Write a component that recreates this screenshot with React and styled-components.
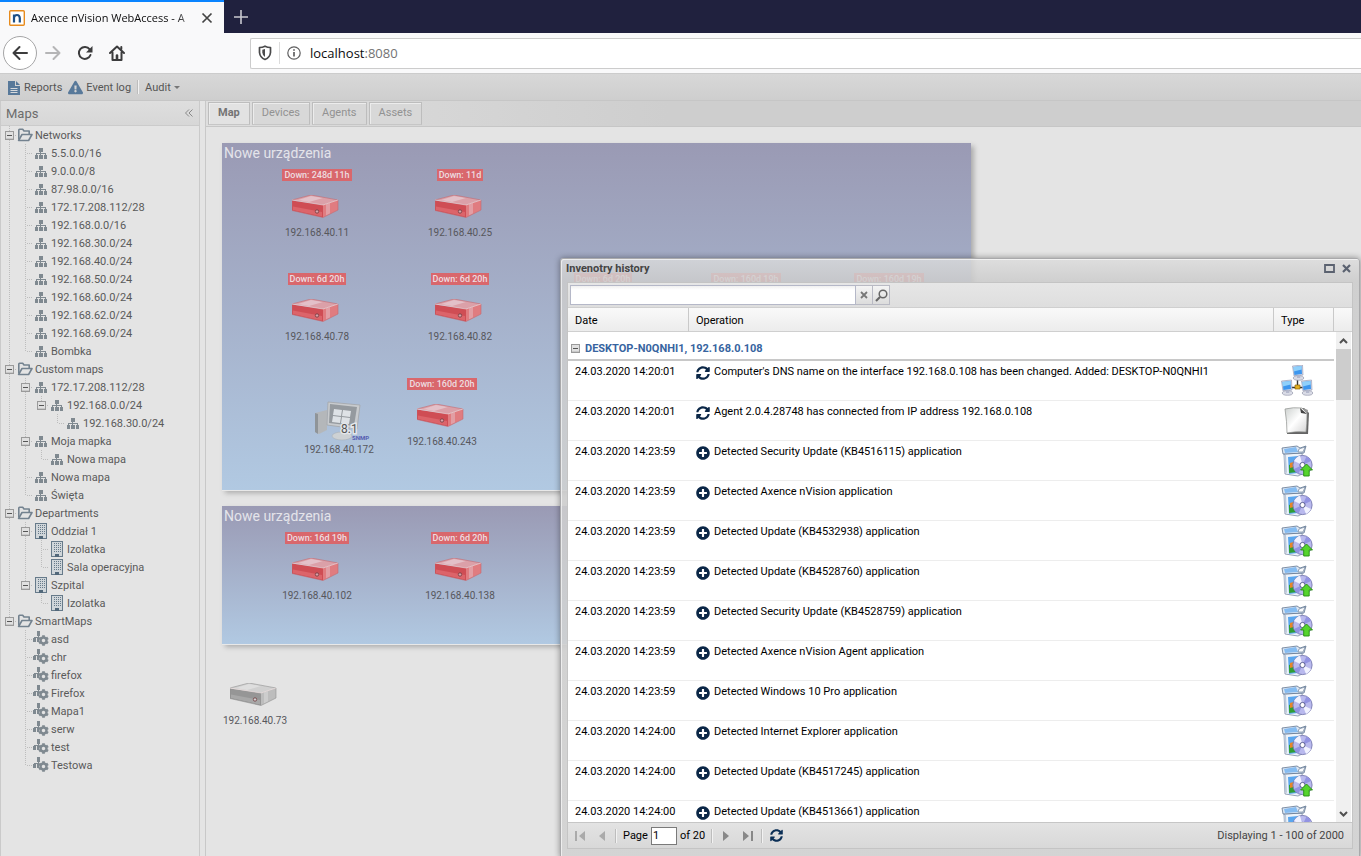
import { useState } from 'react';
import styled, { createGlobalStyle } from 'styled-components';
import { FaCog, FaExclamationTriangle, FaPlusCircle, FaSyncAlt } from 'react-icons/fa';

const GlobalStyle = createGlobalStyle`
    * {
        box-sizing: border-box;
    }

    body {
        margin: 0;
        font-family: Roboto, "Liberation Sans", sans-serif;
        font-size: 11px;
        color: #555;
    }

    button {
        padding: 0;
        border: none;
        background: none;
        font: inherit;
        color: inherit;
    }

    svg {
        display: block;
        flex-shrink: 0;
    }
`;

const tree = [
    {
        name: 'Networks',
        icon: 'folder',
        children: [
            '5.5.0.0/16',
            '9.0.0.0/8',
            '87.98.0.0/16',
            '172.17.208.112/28',
            '192.168.0.0/16',
            '192.168.30.0/24',
            '192.168.40.0/24',
            '192.168.50.0/24',
            '192.168.60.0/24',
            '192.168.62.0/24',
            '192.168.69.0/24',
            'Bombka',
        ].map((name) => ({ name, icon: 'map' })),
    },
    {
        name: 'Custom maps',
        icon: 'folder',
        children: [
            {
                name: '172.17.208.112/28',
                icon: 'map',
                children: [
                    {
                        name: '192.168.0.0/24',
                        icon: 'map',
                        children: [{ name: '192.168.30.0/24', icon: 'map' }],
                    },
                ],
            },
            { name: 'Moja mapka', icon: 'map', children: [{ name: 'Nowa mapa', icon: 'map' }] },
            { name: 'Nowa mapa', icon: 'map' },
            { name: 'Święta', icon: 'map' },
        ],
    },
    {
        name: 'Departments',
        icon: 'folder',
        children: [
            {
                name: 'Oddział 1',
                icon: 'building',
                children: [
                    { name: 'Izolatka', icon: 'building' },
                    { name: 'Sala operacyjna', icon: 'building' },
                ],
            },
            { name: 'Szpital', icon: 'building', children: [{ name: 'Izolatka', icon: 'building' }] },
        ],
    },
    {
        name: 'SmartMaps',
        icon: 'folder',
        children: ['asd', 'chr', 'firefox', 'Firefox', 'Mapa1', 'serw', 'test', 'Testowa'].map(
            (name) => ({ name, icon: 'smart' }),
        ),
    },
];

const panels = [
    { title: 'Nowe urządzenia', x: 16, y: 16, width: 749, height: 347 },
    { title: 'Nowe urządzenia', x: 16, y: 379, width: 749, height: 138 },
];

const devices = [
    { name: '192.168.40.11', down: '248d 11h', x: 111, y: 42 },
    { name: '192.168.40.25', down: '11d', x: 254, y: 42 },
    { name: '192.168.40.78', down: '6d 20h', x: 111, y: 146 },
    { name: '192.168.40.82', down: '6d 20h', x: 254, y: 146 },
    { name: '192.168.40.84', down: '6d 20h', x: 397, y: 146 },
    { name: '192.168.40.90', down: '160d 19h', x: 540, y: 146 },
    { name: '192.168.40.94', down: '160d 19h', x: 683, y: 146 },
    { name: '192.168.40.172', kind: 'pc', x: 133, y: 273 },
    { name: '192.168.40.243', down: '160d 20h', x: 236, y: 251 },
    { name: '192.168.40.102', down: '16d 19h', x: 111, y: 405 },
    { name: '192.168.40.138', down: '6d 20h', x: 254, y: 405 },
    { name: '192.168.40.73', kind: 'idle', x: 49, y: 530 },
];

const history = [
    ['24.03.2020 14:20:01', 'change', "Computer's DNS name on the interface 192.168.0.108 has been changed. Added: DESKTOP-N0QNHI1", 'network'],
    ['24.03.2020 14:20:01', 'change', 'Agent 2.0.4.28748 has connected from IP address 192.168.0.108', 'note'],
    ['24.03.2020 14:23:59', 'add', 'Detected Security Update (KB4516115) application', 'update'],
    ['24.03.2020 14:23:59', 'add', 'Detected Axence nVision application', 'app'],
    ['24.03.2020 14:23:59', 'add', 'Detected Update (KB4532938) application', 'update'],
    ['24.03.2020 14:23:59', 'add', 'Detected Update (KB4528760) application', 'update'],
    ['24.03.2020 14:23:59', 'add', 'Detected Security Update (KB4528759) application', 'update'],
    ['24.03.2020 14:23:59', 'add', 'Detected Axence nVision Agent application', 'app'],
    ['24.03.2020 14:23:59', 'add', 'Detected Windows 10 Pro application', 'app'],
    ['24.03.2020 14:24:00', 'add', 'Detected Internet Explorer application', 'app'],
    ['24.03.2020 14:24:00', 'add', 'Detected Update (KB4517245) application', 'update'],
    ['24.03.2020 14:24:00', 'add', 'Detected Update (KB4513661) application', 'app'],
];

/* ---------- icons ---------- */

const FolderIcon = () => (
    <svg width="16" height="16" viewBox="0 0 16 16" fill="none" stroke="#73828f" strokeWidth="1.6" strokeLinejoin="round">
        <path d="M1.8 12.500V3Q1.800 2.300 2.500 2.300h3.200L7 4h5.200v3" />
        <path d="M1.600 13.500 5 7.500h10l-3.400 6z" />
    </svg>
);

const BuildingIcon = () => (
    <svg width="16" height="18" viewBox="0 0 16 18" fill="none" shapeRendering="crispEdges">
        <path d="M2 1h12v16H2z" fill="#667a8a" />
        <path d="M3 2h10v14H3z" fill="#d0d6da" />
        <path d="M5.500 3v10M7.500 3v10M9.500 3v10M11.500 3v10" stroke="#667a8a" strokeDasharray="1 1" />
        <path d="M6 14h4v3H6z" fill="#52687a" />
    </svg>
);

const MapIcon = () => (
    <svg width="16" height="18" viewBox="0 0 16 18" fill="#7f8990" shapeRendering="crispEdges">
        <path d="M6 4h4v4H6zM7 8h1v2H7zM3 9h10v1H3zM3 9h1v3H3zM7 9h1v3H7zM12 9h1v3h-1z" />
        <path d="M2 11h3v4H2zM6 11h4v4H6zM11 11h3v4h-3z" />
    </svg>
);

const SmartIcon = () => (
    <svg width="16" height="18" viewBox="0 0 16 18" fill="#7f8990">
        <path d="M4 1h3v5H4zM5 6h1v2H5zM1 7h5v1H1zM1 7h1v3H1zM0 8h3v4H0zM4 8h2v4H4z" shapeRendering="crispEdges" />
        <FaCog x="5" y="5" size={11} color="#7f8990" />
    </svg>
);

const TreeIcon = ({ type }) => {
    if (type === 'folder') return <FolderIcon />;
    if (type === 'building') return <BuildingIcon />;
    if (type === 'smart') return <SmartIcon />;
    return <MapIcon />;
};

const TreeGuide = ({ up, down, across }) => (
    <svg width="16" height="18" viewBox="0 0 16 18" stroke="#bdbdbd" strokeDasharray="1 1" fill="none" shapeRendering="crispEdges">
        {up && <path d="M8.500 0v9" />}
        {down && <path d="M8.500 10v8" />}
        {across && <path d="M10 9.500h6" />}
    </svg>
);

const MinusBox = () => (
    <svg width="9" height="9" viewBox="0 0 9 9" shapeRendering="crispEdges">
        <path d="M.5 .5h8v8h-8z" fill="#e0e0e0" stroke="#9a9a9a" />
        <path d="M1 7.500h7" stroke="#c9c9c9" />
        <path d="M2 4.500h5" stroke="#555" />
    </svg>
);

const ReportIcon = () => (
    <svg width="14" height="15" viewBox="0 0 14 15">
        <path d="M1 1h7v5h5v9H1zM9 1l4 4H9z" fill="#58799a" />
        <path d="M3.500 8.500h7M3.500 10.500h7M3.500 12.500h7" stroke="#d6d9dc" />
    </svg>
);

const DeviceIcon = ({ idle }) => {
    const c = idle
        ? { top: '#d0d0d0', shine: '#dedede', front: '#969696', low: '#a8a8a8', side: '#bdbdbd', line: '#8c8c8c' }
        : { top: '#dba0a8', shine: '#e3c0c8', front: '#cf4d54', low: '#dc646a', side: '#e07c80', line: '#c4666d' };
    return (
        <svg width="50" height="24" viewBox="0 0 50 24">
            <path d="M0 5 19 0l27 5-15 5z" fill={c.top} />
            <path d="M6 5 19 1l12 2-14 4z" fill={c.shine} />
            <path d="M0 5.500 31 10v12.500L0 15.500z" fill={c.front} />
            <path d="M1 11.500 30 17v4.500L1 15z" fill={c.low} />
            <path d="M31 10 46 5v10l-15 7.500z" fill={c.side} />
            <path d="m34 9.200 4-1.200v10.600l-4 2z" fill={c.shine} opacity=".5" />
            <path d="M0 5 19 0l27 5v10l-15 7.500L0 15.500z" fill="none" stroke={c.line} strokeWidth=".7" opacity=".8" />
            <path d="m0 5 31 5 15-5" fill="none" stroke="#f1dede" strokeWidth=".7" opacity=".8" />
            <circle cx="25" cy="16.500" r="1.700" fill={c.top} stroke="#70383c" strokeWidth=".8" />
        </svg>
    );
};

const PcIcon = () => (
    <svg width="62" height="42" viewBox="0 0 62 42">
        <path d="m7 13 12-3v20L11 34l-4-2z" fill="#b4b7ba" />
        <path d="m7 13 3 1v20l-3-2z" fill="#8f9498" />
        <path d="m20 2 32 3-3 24-30-4z" fill="#c8cbce" stroke="#a3a6a9" strokeWidth=".8" />
        <path d="m22 4 27 3-3 19-25-3z" fill="#959a9f" />
        <path d="m26 9 8 1-1 6-8-1zm9 1 8 1-1 6-8-1zM25 16l8 1-1 6-8-1zm9 1 8 1-1 6-8-1z" fill="#dee2e6" />
        <ellipse cx="34" cy="36" rx="10" ry="4" fill="#cdd1d4" stroke="#a9adb0" strokeWidth=".5" />
        <text x="33" y="33" fontSize="12" fill="#555" stroke="#e4e7ea" strokeWidth="3" paintOrder="stroke">8.1</text>
        <text x="44" y="40" fontSize="6" fontWeight="700" fill="#555cb0">SNMP</text>
    </svg>
);

const Monitor = ({ x, y }) => (
    <g transform={`translate(${x} ${y})`}>
        <path d="M.5 1 10.500 0l.5 10-9 1z" fill="#d8dbe8" stroke="#8d93b0" strokeWidth=".6" />
        <path d="m1.500 2 8-1 .5 8-7.600 1z" fill="#3d96ee" />
        <path d="m1.500 2 8-1 .2 3.500-7.900 2z" fill="#8fd0fb" />
        <ellipse cx="6.500" cy="13" rx="5.200" ry="2.300" fill="#d9dbe6" stroke="#8d90a5" strokeWidth=".6" />
        <path d="m5 10.500 3-.4.3 3H5z" fill="#b4b8cc" />
    </g>
);

const TypeIcon = ({ type }) => {
    if (type === 'network') {
        return (
            <svg width="32" height="32" viewBox="0 0 32 32">
                <path d="M16.500 15v7M8 22.500h17" stroke="#333" strokeWidth="1.400" />
                <Monitor x="11" y="0" />
                <Monitor x="0" y="15" />
                <Monitor x="20" y="15" />
                <path d="M14 20h5v4h-5z" fill="#e2ae20" stroke="#8c6508" strokeWidth=".7" />
            </svg>
        );
    }
    if (type === 'note') {
        return (
            <svg width="32" height="32" viewBox="0 0 32 32">
                <defs>
                    <linearGradient id="paper" x1="0" x2="1" y1="0" y2="1">
                        <stop offset="0" stopColor="#cdd1cf" />
                        <stop offset=".5" stopColor="#fff" />
                        <stop offset="1" stopColor="#d2d2d2" />
                    </linearGradient>
                </defs>
                <path d="m6 5 17-2 5 5-1 21H6z" fill="#222" opacity=".7" />
                <path d="M4 4q8-2 17-1l5 5q0 12-1 19-10-1-19 1Q6 17 4 4z" fill="url(#paper)" stroke="#8c8f8d" strokeWidth=".7" />
                <path d="m19 3 7 6-6-1z" fill="#444" />
                <path d="m22 3 5 2-1 4z" fill="#999" />
            </svg>
        );
    }
    return (
        <svg width="32" height="32" viewBox="0 0 32 32">
            <path d="m3 9 18-1 2 20-6 3-13-2z" fill="#eef3fa" stroke="#7c8ba4" strokeWidth=".8" />
            <path d="m5 10 1 18-2-1-1-17z" fill="#bcc9da" />
            <path d="m7 12 10-1v17l-9 1z" fill="#5aa6ee" />
            <path d="m8 20 8-2v9l-8 1z" fill="#2f9e35" />
            <path d="m9 18 7-2v5l-7 2z" fill="#e7852b" />
            <path d="M2 9 1 3l15-2 3 2 6-2-2 7z" fill="#dde6f2" stroke="#5f7590" strokeWidth=".8" />
            <path d="m3 4 12-2 2 5-13 1z" fill="#86bcf1" />
            <path d="m18 4 6-2-2 5h-5z" fill="#fafbfd" stroke="#5f7590" strokeWidth=".6" />
            <circle cx="21.500" cy="20" r="9.600" fill="#b9b9ee" stroke="#7779b0" strokeWidth=".9" />
            <path d="M21.500 20 13 16a9.500 9.500 0 0 1 6-5.200zM21.500 20l8.500 4a9.500 9.500 0 0 1-5 5z" fill="#f0f1ff" />
            <path d="m21.500 20 4-8.500a9 9 0 0 1 4.500 4.500zM21.500 20l-4 8.500a9 9 0 0 1-4.500-4.500z" fill="#9293e2" />
            <circle cx="21.500" cy="20" r="2.600" fill="#fff" stroke="#5b5f92" strokeWidth="1" />
            {type === 'update' && (
                <path d="m25.500 19 6 6h-3.300v6h-5.500v-6h-3.200z" fill="#56d42d" stroke="#268b12" strokeWidth=".9" />
            )}
        </svg>
    );
};

/* ---------- browser ---------- */

const TabBar = styled.div`
    display: flex;
    height: 33px;
    background: #20213e;
`;

const BrowserTab = styled.div`
    display: flex;
    align-items: center;
    gap: 6px;
    width: 224px;
    padding: 0 11px 0 9px;
    border-top: 2px solid #0a84ff;
    background: #f9f9fa;
    color: #0c0c0d;
    font-family: "Open Sans", "Noto Sans", sans-serif;
`;

const BrowserTitle = styled.span`
    flex: 1;
    white-space: nowrap;
    font-size: 11px;
    mask-image: linear-gradient(to right, #000 88%, rgba(0, 0, 0, 0.2));
`;

const NewTab = styled.button`
    width: 33px;
    display: grid;
    place-items: center;
`;

const NavBar = styled.div`
    display: flex;
    align-items: center;
    height: 41px;
    padding-left: 3px;
    border-bottom: 1px solid #ccc;
    background: #f9f9fa;
`;

const NavButton = styled.button`
    display: grid;
    place-items: center;
    width: 32px;
    height: 32px;
`;

const BackButton = styled(NavButton)`
    width: 34px;
    height: 34px;
    border: 1px solid #a5a5a6;
    border-radius: 50%;
    background: #fff;
`;

const AddressBar = styled.div`
    flex: 1;
    display: flex;
    align-items: center;
    height: 31px;
    margin-left: 117px;
    padding-left: 7px;
    border: 1px solid #ccc;
    border-right: none;
    border-radius: 2px 0 0 2px;
    background: #fff;
    font-family: "Open Sans", "Noto Sans", sans-serif;
    font-size: 13px;
    color: #0c0c0d;

    & span {
        color: #737373;
    }
`;

const AddressDivider = styled.i`
    width: 1px;
    height: 22px;
    margin: 0 7px;
    background: #dcdcdc;
`;

const Address = styled.div`
    margin-left: 9px;
`;

const Browser = () => (
    <header>
        <TabBar>
            <BrowserTab>
                <svg width="16" height="16" viewBox="0 0 16 16">
                    <rect x=".7" y=".7" width="14.600" height="14.600" rx="1" fill="#fff" stroke="#e78b1d" strokeWidth="1.400" />
                    <path d="M5 12.500V4.500M5 7.500Q5.500 5 8 5t2.800 3v4.500" fill="none" stroke="#1c4f86" strokeWidth="2.200" />
                </svg>
                <BrowserTitle>Axence nVision WebAccess - A</BrowserTitle>
                <button aria-label="Close tab">
                    <svg width="12" height="12" viewBox="0 0 12 12" stroke="#444" strokeWidth="1.700">
                        <path d="m1.500 1.500 9 9m0-9-9 9" />
                    </svg>
                </button>
            </BrowserTab>
            <NewTab aria-label="New tab">
                <svg width="14" height="14" viewBox="0 0 14 14" stroke="#c9c9d0" strokeWidth="1.600">
                    <path d="M7 0v14M0 7h14" />
                </svg>
            </NewTab>
        </TabBar>
        <NavBar>
            <BackButton aria-label="Back">
                <svg width="16" height="16" viewBox="0 0 16 16" fill="none" stroke="#3c3c3d" strokeWidth="2" strokeLinecap="round" strokeLinejoin="round">
                    <path d="M15 8H1.500M7.500 2l-6 6 6 6" />
                </svg>
            </BackButton>
            <NavButton aria-label="Forward">
                <svg width="16" height="16" viewBox="0 0 16 16" fill="none" stroke="#b5b5b6" strokeWidth="2" strokeLinecap="round" strokeLinejoin="round">
                    <path d="M1 8h13.500M8.500 2l6 6-6 6" />
                </svg>
            </NavButton>
            <NavButton aria-label="Reload">
                <svg width="16" height="16" viewBox="0 0 16 16" fill="none" stroke="#3c3c3d" strokeWidth="2">
                    <path d="M12.700 4.300A6 6 0 1 0 13.500 10" strokeLinecap="round" />
                    <path d="M15.500 1v6.500H9z" fill="#3c3c3d" stroke="none" />
                </svg>
            </NavButton>
            <NavButton aria-label="Home">
                <svg width="16" height="16" viewBox="0 0 16 16" fill="none" stroke="#3c3c3d" strokeWidth="2" strokeLinecap="round" strokeLinejoin="round">
                    <path d="m1 8 7-6.500L15 8M3.500 7.500V15h9V7.500" />
                    <path d="M8 10.500v4" strokeWidth="2.600" />
                    <path d="M12.300 2v2" />
                </svg>
            </NavButton>
            <AddressBar>
                <svg width="14" height="16" viewBox="0 0 14 16" fill="none" stroke="#4a4a4b" strokeWidth="1.700">
                    <path d="M1.500 2.500Q4.500 2.500 7 1.200q2.500 1.300 5.500 1.300v5Q12 12.500 7 14.500 2 12.500 1.500 7.500z" strokeLinejoin="round" />
                    <path d="M7 4v8Q4.500 10.500 4.300 7.500V4.800z" fill="#4a4a4b" stroke="none" />
                </svg>
                <AddressDivider />
                <svg width="14" height="14" viewBox="0 0 14 14" fill="none" stroke="#5f5f60" strokeWidth="1.200">
                    <circle cx="7" cy="7" r="6.200" />
                    <path d="M7 6v4.500M7 3.200v1.600" strokeWidth="1.700" />
                </svg>
                <Address>
                    localhost<span>:8080</span>
                </Address>
            </AddressBar>
        </NavBar>
    </header>
);

/* ---------- application ---------- */

const Page = styled.div`
    position: relative;
    display: flex;
    flex-direction: column;
    height: 100vh;
    overflow: hidden;
    background: #e4e4e4;
`;

const MainToolbar = styled.nav`
    display: flex;
    align-items: center;
    gap: 6px;
    height: 27px;
    padding-left: 7px;
    border-bottom: 1px solid #c6c6c6;
    background: linear-gradient(#d8d8d8, #cecece);
`;

const ToolbarButton = styled.button`
    display: flex;
    align-items: center;
    gap: 3px;
    color: #555;
`;

const Divider = styled.i`
    width: 2px;
    height: 14px;
    border-left: 1px solid #bdbdbd;
    border-right: 1px solid #f2f2f2;
`;

const Caret = styled.i`
    border: 3px solid transparent;
    border-top-color: #777;
    border-bottom: none;
`;

const Workspace = styled.div`
    flex: 1;
    display: flex;
    min-height: 0;
`;

const Sidebar = styled.aside`
    width: 200px;
    flex-shrink: 0;
    border: solid #cacaca;
    border-width: 0 1px;
`;

const SidebarHeader = styled.div`
    display: flex;
    align-items: center;
    justify-content: space-between;
    height: 25px;
    padding: 0 6px 0 5px;
    border-bottom: 1px solid #cbcbcb;
    background: linear-gradient(#dedede, #d7d7d7);
    font-size: 13px;
    color: #6c6c6c;
`;

const TreeList = styled.ul`
    margin: 0;
    padding: 0;
    list-style: none;
`;

const TreeRow = styled.li`
    display: flex;
    align-items: center;
    height: 18px;
    color: #5a5a5a;
`;

const ExpanderCell = styled.button`
    position: relative;
    display: flex;

    & svg + svg {
        position: absolute;
        left: 4px;
        top: 5px;
    }
`;

const TreeIconCell = styled.span`
    display: grid;
    place-items: center;
    width: 16px;
    height: 18px;
    margin-right: 2px;
`;

const Main = styled.main`
    flex: 1;
    display: flex;
    flex-direction: column;
    min-width: 0;
    margin-left: 5px;
    border-left: 1px solid #c8c8c8;
`;

const TabStrip = styled.div`
    display: flex;
    align-items: flex-start;
    gap: 2px;
    height: 26px;
    padding: 1px 2px 0;
    border-bottom: 1px solid #c6c6c6;
    background: linear-gradient(to right, #dedede, #cecece 40%);
`;

const Tab = styled.button`
    height: 23px;
    padding: 0 9px 2px;
    border: 1px solid #bdbdbd;
    border-bottom-color: #c6c6c6;
    box-shadow: inset 1px 1px #ececec;
    background: ${({ $active }) => ($active ? '#e2e2e2' : '#d8d8d8')};
    color: ${({ $active }) => ($active ? '#747474' : '#929292')};
    font-weight: ${({ $active }) => ($active ? 700 : 400)};
`;

const Canvas = styled.div`
    position: relative;
    flex: 1;
    overflow: hidden;
`;

const MapPanel = styled.section`
    position: absolute;
    left: ${({ $x }) => $x}px;
    top: ${({ $y }) => $y}px;
    width: ${({ $width }) => $width}px;
    height: ${({ $height }) => $height}px;
    padding: 2px;
    background: linear-gradient(#9a9ab4, #b1c9e2);
    box-shadow: 0 1px #e8e8e8, 3px 3px 5px rgba(0, 0, 0, 0.25);
    color: #e4e4ea;
    font-size: 14px;
    line-height: 16px;
`;

const Device = styled.div`
    position: absolute;
    left: ${({ $x }) => $x}px;
    top: ${({ $y }) => $y}px;
    display: flex;
    flex-direction: column;
    align-items: center;
    width: 120px;
    margin-left: -60px;
    font-size: 10px;
    line-height: 14px;
    color: #57575c;
`;

const DeviceStatus = styled.span`
    height: 12px;
    margin-bottom: 14px;
    padding: 0 2px;
    background: ${({ $down }) => ($down ? '#d9676c' : 'transparent')};
    color: #eddde0;
    font-size: 9px;
    font-weight: 500;
    line-height: 12px;
`;

const DeviceName = styled.span`
    margin-top: ${({ $pc }) => ($pc ? 1 : 7)}px;
`;

const flatten = (nodes, guides = []) =>
    nodes.flatMap((node, i) => {
        const last = i === nodes.length - 1;
        return [
            { ...node, guides, last },
            ...(node.children ? flatten(node.children, [...guides, !last]) : []),
        ];
    });

const MapsTree = () => (
    <TreeList>
        {flatten(tree).map((node, i) => (
            <TreeRow key={i}>
                {node.guides.map((line, level) => (
                    <TreeGuide key={level} up={line} down={line} />
                ))}
                {node.children ? (
                    <ExpanderCell aria-label={`Collapse ${node.name}`}>
                        <TreeGuide up down={!node.last} across />
                        <MinusBox />
                    </ExpanderCell>
                ) : (
                    <TreeGuide up down={!node.last} across />
                )}
                <TreeIconCell>
                    <TreeIcon type={node.icon} />
                </TreeIconCell>
                {node.name}
            </TreeRow>
        ))}
    </TreeList>
);

const NetworkMap = () => (
    <Canvas>
        {panels.map((panel) => (
            <MapPanel key={panel.y} $x={panel.x} $y={panel.y} $width={panel.width} $height={panel.height}>
                {panel.title}
            </MapPanel>
        ))}
        {devices.map(({ name, down, kind, x, y }) => (
            <Device key={name} $x={x} $y={y}>
                {kind === 'pc' ? (
                    <PcIcon />
                ) : (
                    <>
                        <DeviceStatus $down={down}>{down && `Down: ${down}`}</DeviceStatus>
                        <DeviceIcon idle={kind === 'idle'} />
                    </>
                )}
                <DeviceName $pc={kind === 'pc'}>{name}</DeviceName>
            </Device>
        ))}
    </Canvas>
);

/* ---------- history window ---------- */

const Window = styled.section`
    position: absolute;
    top: 258px;
    right: 1px;
    bottom: -2px;
    width: 800px;
    display: flex;
    flex-direction: column;
    padding: 0 6px 8px;
    border: 1px solid #a9a9ab;
    border-radius: 3px 3px 0 0;
    background: linear-gradient(rgba(220, 220, 220, 0.8), rgba(204, 204, 204, 0.85) 22px, rgba(210, 210, 210, 0.9));
    box-shadow: inset 1px 1px rgba(255, 255, 255, 0.6), 0 0 6px rgba(0, 0, 0, 0.4);
    color: #000;
`;

const WindowHeader = styled.header`
    display: flex;
    align-items: center;
    gap: 7px;
    height: 23px;
    padding: 0 2px 4px 0;
    color: #444;
    font-weight: 700;
`;

const WindowTitle = styled.span`
    flex: 1;
    margin-left: -1px;
`;

const WindowBody = styled.div`
    flex: 1;
    display: flex;
    flex-direction: column;
    min-height: 0;
    border: 1px solid #c4c4c4;
    background: #fff;
`;

const SearchBar = styled.form`
    display: flex;
    height: 25px;
    padding: 2px;
    border-bottom: 1px solid #cfcfcf;
    background: linear-gradient(#e6e6e6, #dedede);
`;

const SearchInput = styled.input`
    width: 286px;
    height: 20px;
    padding: 1px 3px;
    border: 1px solid #b5b8c8;
    background: linear-gradient(#f0f0f0, #fff 4px);
    font: inherit;
`;

const SearchButton = styled.button`
    display: grid;
    place-items: center;
    width: 17px;
    height: 20px;
    border: 1px solid #b9bac4;
    border-left: none;
    background: linear-gradient(#f4f4f4, #dcdcdc);
`;

const Grid = styled.div`
    position: relative;
    flex: 1;
    min-height: 0;
    overflow: hidden;
`;

const HistoryTable = styled.table`
    width: 100%;
    table-layout: fixed;
    border-collapse: separate;
    border-spacing: 0;

    & th {
        height: 24px;
        padding: 2px 6px 0 7px;
        border-right: 1px solid #c9c9c9;
        border-bottom: 1px solid #cfcfcf;
        background: linear-gradient(#f9f9f9, #ececec);
        font-weight: 400;
        text-align: left;
    }

    & th:last-child {
        border-right: none;
    }

    & td {
        height: 40px;
        padding: 4px 6px 3px 7px;
        border-bottom: 1px solid #ededed;
        line-height: 13px;
        vertical-align: top;
    }
`;

const GroupRow = styled.tr`
    & td {
        height: 29px;
        padding: 10px 3px 0;
        border-bottom: 2px solid #c8c8c8;
        color: #3764a0;
        font-weight: 700;
    }
`;

const GroupToggle = styled.button`
    display: flex;
    align-items: center;
    gap: 5px;
`;

const Operation = styled.div`
    display: flex;
    gap: 4px;

    & svg {
        margin-top: 1px;
        color: #0b2747;
    }
`;

const Scrollbar = styled.div`
    position: absolute;
    top: 24px;
    right: 1px;
    bottom: 0;
    display: flex;
    flex-direction: column;
    width: 15px;
    background: #f0f0f0;
`;

const ScrollArrow = styled.button`
    display: grid;
    place-items: center;
    height: 17px;
`;

const ScrollTrack = styled.div`
    flex: 1;

    &::before {
        content: '';
        display: block;
        height: 51px;
        background: #cdcdcd;
    }
`;

const Paging = styled.footer`
    display: flex;
    align-items: center;
    gap: 4px;
    height: 26px;
    padding: 0 8px 0 3px;
    border-top: 1px solid #c6c6c6;
    background: linear-gradient(#e3e3e3, #d8d8d8);
`;

const PageButton = styled.button`
    display: grid;
    place-items: center;
    width: 18px;
    height: 22px;
    color: ${({ $muted }) => ($muted ? '#aaa' : '#888')};

    & svg {
        fill: currentColor;
    }
`;

const PageLabel = styled.label`
    display: flex;
    align-items: center;
    gap: 3px;
    margin: 0 2px;
`;

const PageInput = styled.input`
    width: 26px;
    height: 18px;
    padding: 0 1px;
    border: 1px solid #7a7a7a;
    background: #fff;
    font: inherit;
`;

const PageInfo = styled.span`
    margin-left: auto;
    color: #444;
`;

const HistoryWindow = () => {
    const [query, setQuery] = useState('');
    const [page, setPage] = useState('1');

    return (
        <Window role="dialog" aria-label="Invenotry history">
            <WindowHeader>
                <WindowTitle>Invenotry history</WindowTitle>
                <button aria-label="Maximize">
                    <svg width="11" height="9" viewBox="0 0 11 9">
                        <path d="M1 1h9v7H1z" fill="none" stroke="#5b6270" strokeWidth="1.800" />
                    </svg>
                </button>
                <button aria-label="Close">
                    <svg width="9" height="9" viewBox="0 0 9 9">
                        <path d="m1 1 7 7m0-7L1 8" stroke="#5b6270" strokeWidth="2.200" />
                    </svg>
                </button>
            </WindowHeader>
            <WindowBody>
                <SearchBar onSubmit={(e) => e.preventDefault()}>
                    <SearchInput aria-label="Search" value={query} onChange={(e) => setQuery(e.target.value)} />
                    <SearchButton type="button" aria-label="Clear" onClick={() => setQuery('')}>
                        <svg width="8" height="8" viewBox="0 0 8 8" stroke="#777" strokeWidth="1.800">
                            <path d="m1 1 6 6m0-6L1 7" />
                        </svg>
                    </SearchButton>
                    <SearchButton aria-label="Find">
                        <svg width="13" height="13" viewBox="0 0 13 13" fill="none" stroke="#666">
                            <circle cx="8" cy="5" r="3.800" strokeWidth="1.500" />
                            <path d="m5 8-4 4" strokeWidth="2.200" />
                        </svg>
                    </SearchButton>
                </SearchBar>
                <Grid>
                    <HistoryTable>
                        <colgroup>
                            <col width="121" />
                            <col />
                            <col width="60" />
                            <col width="18" />
                        </colgroup>
                        <thead>
                            <tr>
                                <th>Date</th>
                                <th>Operation</th>
                                <th>Type</th>
                                <th aria-hidden="true" />
                            </tr>
                        </thead>
                        <tbody>
                            <GroupRow>
                                <td colSpan={3}>
                                    <GroupToggle>
                                        <MinusBox />
                                        DESKTOP-N0QNHI1, 192.168.0.108
                                    </GroupToggle>
                                </td>
                            </GroupRow>
                            {history.map(([date, action, text, type]) => (
                                <tr key={text}>
                                    <td>{date}</td>
                                    <td>
                                        <Operation>
                                            {action === 'add' ? <FaPlusCircle size={14} /> : <FaSyncAlt size={14} />}
                                            {text}
                                        </Operation>
                                    </td>
                                    <td>
                                        <TypeIcon type={type} />
                                    </td>
                                </tr>
                            ))}
                        </tbody>
                    </HistoryTable>
                    <Scrollbar>
                        <ScrollArrow aria-label="Scroll up">
                            <svg width="9" height="6" viewBox="0 0 9 6" fill="none" stroke="#505050" strokeWidth="2">
                                <path d="m1 5 3.500-3.500L8 5" />
                            </svg>
                        </ScrollArrow>
                        <ScrollTrack />
                        <ScrollArrow aria-label="Scroll down">
                            <svg width="9" height="6" viewBox="0 0 9 6" fill="none" stroke="#505050" strokeWidth="2">
                                <path d="m1 1 3.500 3.500L8 1" />
                            </svg>
                        </ScrollArrow>
                    </Scrollbar>
                </Grid>
                <Paging>
                    <PageButton aria-label="First page" $muted>
                        <svg width="16" height="12" viewBox="0 0 16 12">
                            <path d="M3 1h2v10H3zM13 1v10L7 6z" />
                        </svg>
                    </PageButton>
                    <PageButton aria-label="Previous page" $muted>
                        <svg width="12" height="12" viewBox="0 0 12 12">
                            <path d="M9 1v10L3 6z" />
                        </svg>
                    </PageButton>
                    <Divider />
                    <PageLabel>
                        Page
                        <PageInput value={page} onChange={(e) => setPage(e.target.value)} />
                        of 20
                    </PageLabel>
                    <Divider />
                    <PageButton aria-label="Next page">
                        <svg width="12" height="12" viewBox="0 0 12 12">
                            <path d="M3 1v10l6-5z" />
                        </svg>
                    </PageButton>
                    <PageButton aria-label="Last page">
                        <svg width="16" height="12" viewBox="0 0 16 12">
                            <path d="M11 1h2v10h-2zM3 1v10l6-5z" />
                        </svg>
                    </PageButton>
                    <Divider />
                    <PageButton aria-label="Refresh">
                        <FaSyncAlt size={13} color="#0b2f56" />
                    </PageButton>
                    <PageInfo>Displaying 1 - 100 of 2000</PageInfo>
                </Paging>
            </WindowBody>
        </Window>
    );
};

const App = () => {
    const [tab, setTab] = useState('Map');

    return (
        <Page>
            <GlobalStyle />
            <Browser />
            <MainToolbar>
                <ToolbarButton>
                    <ReportIcon />
                    Reports
                </ToolbarButton>
                <ToolbarButton>
                    <FaExclamationTriangle size={15} color="#58799a" />
                    Event log
                </ToolbarButton>
                <Divider />
                <ToolbarButton>
                    Audit
                    <Caret />
                </ToolbarButton>
            </MainToolbar>
            <Workspace>
                <Sidebar>
                    <SidebarHeader>
                        Maps
                        <button aria-label="Collapse panel">
                            <svg width="8" height="8" viewBox="0 0 8 8" fill="none" stroke="#888">
                                <path d="M4 .5.500 4 4 7.500M7.500.5 4 4l3.500 3.500" />
                            </svg>
                        </button>
                    </SidebarHeader>
                    <MapsTree />
                </Sidebar>
                <Main>
                    <TabStrip>
                        {['Map', 'Devices', 'Agents', 'Assets'].map((name) => (
                            <Tab key={name} $active={name === tab} onClick={() => setTab(name)}>
                                {name}
                            </Tab>
                        ))}
                    </TabStrip>
                    <NetworkMap />
                </Main>
            </Workspace>
            <HistoryWindow />
        </Page>
    );
};

export default App;
